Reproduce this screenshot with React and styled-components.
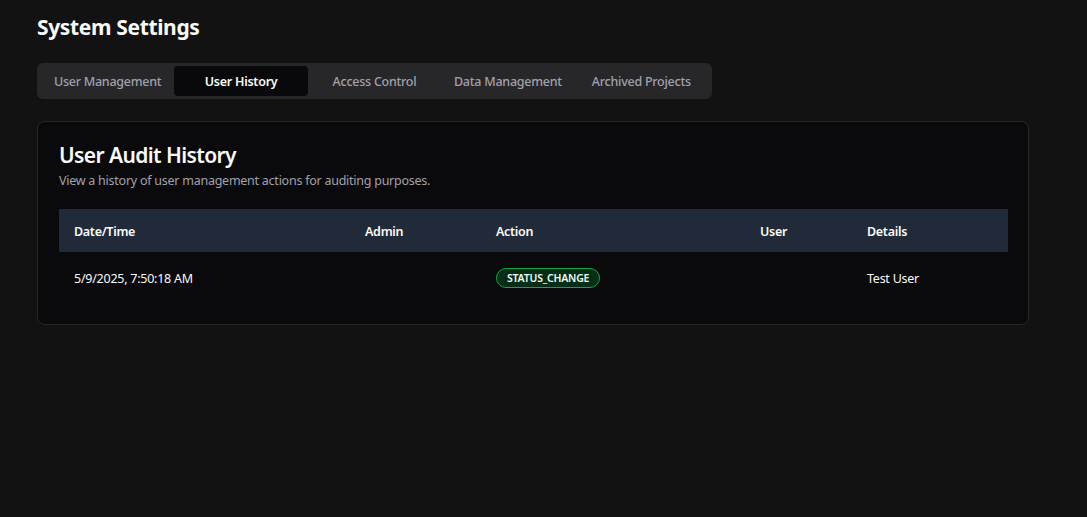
import React from 'react'
import styled, { createGlobalStyle } from 'styled-components'

const GlobalStyle = createGlobalStyle`
  * { box-sizing: border-box; }
  body {
    margin: 0;
    background: #121212;
    font-family: 'Noto Sans', 'Open Sans', sans-serif;
    color: #fafafa;
  }
`

const tabs = ['User Management', 'User History', 'Access Control', 'Data Management', 'Archived Projects']

const columns = [
  { name: 'Date/Time', width: 291 },
  { name: 'Admin', width: 131 },
  { name: 'Action', width: 264 },
  { name: 'User', width: 107 },
  { name: 'Details', width: 156 },
]

const rows = [
  { date: '5/9/2025, 7:50:18 AM', admin: '', action: 'STATUS_CHANGE', user: '', details: 'Test User' },
]

const App = () => {
  return (
    <Page>
      <GlobalStyle />
      <Title>System Settings</Title>
      <TabList>
        {tabs.map(tab => (
          <Tab key={tab} active={tab === 'User History'}>
            {tab}
          </Tab>
        ))}
      </TabList>
      <Card>
        <CardTitle>User Audit History</CardTitle>
        <CardSub>View a history of user management actions for auditing purposes.</CardSub>
        <Table>
          <colgroup>
            {columns.map(c => (
              <col key={c.name} style={{ width: c.width }} />
            ))}
          </colgroup>
          <thead>
            <tr>
              {columns.map(c => (
                <Th key={c.name}>{c.name}</Th>
              ))}
            </tr>
          </thead>
          <tbody>
            {rows.map((r, i) => (
              <tr key={i}>
                <Td>{r.date}</Td>
                <Td>{r.admin}</Td>
                <Td>
                  <Badge>{r.action}</Badge>
                </Td>
                <Td>{r.user}</Td>
                <Td>{r.details}</Td>
              </tr>
            ))}
          </tbody>
        </Table>
      </Card>
    </Page>
  )
}

const Page = styled.div`
  padding: 12px 37px;
  width: 1029px;
  box-sizing: content-box;
`

const Title = styled.h1`
  margin: 0;
  font-size: 21px;
  font-weight: 700;
  line-height: 30px;
  letter-spacing: -0.35px;
`

const TabList = styled.div`
  margin-top: 21px;
  width: 675px;
  height: 36px;
  padding: 3px 4px;
  display: grid;
  grid-template-columns: repeat(5, 1fr);
  background: #27272a;
  border-radius: 6px;
`

const Tab = styled.button`
  border: 0;
  border-radius: 4px;
  font-family: inherit;
  font-size: 12.5px;
  letter-spacing: -0.25px;
  background: ${p => (p.active ? '#09090b' : 'transparent')};
  color: ${p => (p.active ? '#fafafa' : '#a1a1aa')};
  font-weight: ${p => (p.active ? 600 : 500)};
  padding: 0;
`

const Card = styled.div`
  margin-top: 22px;
  width: 992px;
  padding: 19px 21px 20px 21px;
  background: #0a0a0c;
  border: 1px solid #27272a;
  border-radius: 8px;
`

const CardTitle = styled.h2`
  margin: 0;
  font-size: 21px;
  font-weight: 600;
  line-height: 28px;
  letter-spacing: -0.6px;
`

const CardSub = styled.p`
  margin: 3px 0 0;
  font-size: 12.5px;
  line-height: 18px;
  letter-spacing: -0.25px;
  color: #a1a1aa;
`

const Table = styled.table`
  margin-top: 19px;
  width: 949px;
  border-collapse: collapse;
  table-layout: fixed;
`

const Th = styled.th`
  height: 43px;
  padding: 1px 15px 0;
  text-align: left;
  font-size: 12.5px;
  font-weight: 600;
  letter-spacing: -0.3px;
  color: #fafafa;
  background: #212a38;
`

const Td = styled.td`
  height: 52px;
  padding: 0 15px;
  font-size: 12.5px;
  letter-spacing: -0.25px;
  color: #fafafa;
`

const Badge = styled.span`
  display: inline-flex;
  align-items: center;
  height: 20px;
  padding: 0 10px;
  font-size: 10.5px;
  font-weight: 600;
  letter-spacing: -0.2px;
  color: #f0fdf4;
  background: #052e16;
  border: 1px solid #16a34a;
  border-radius: 999px;
`

export default App
